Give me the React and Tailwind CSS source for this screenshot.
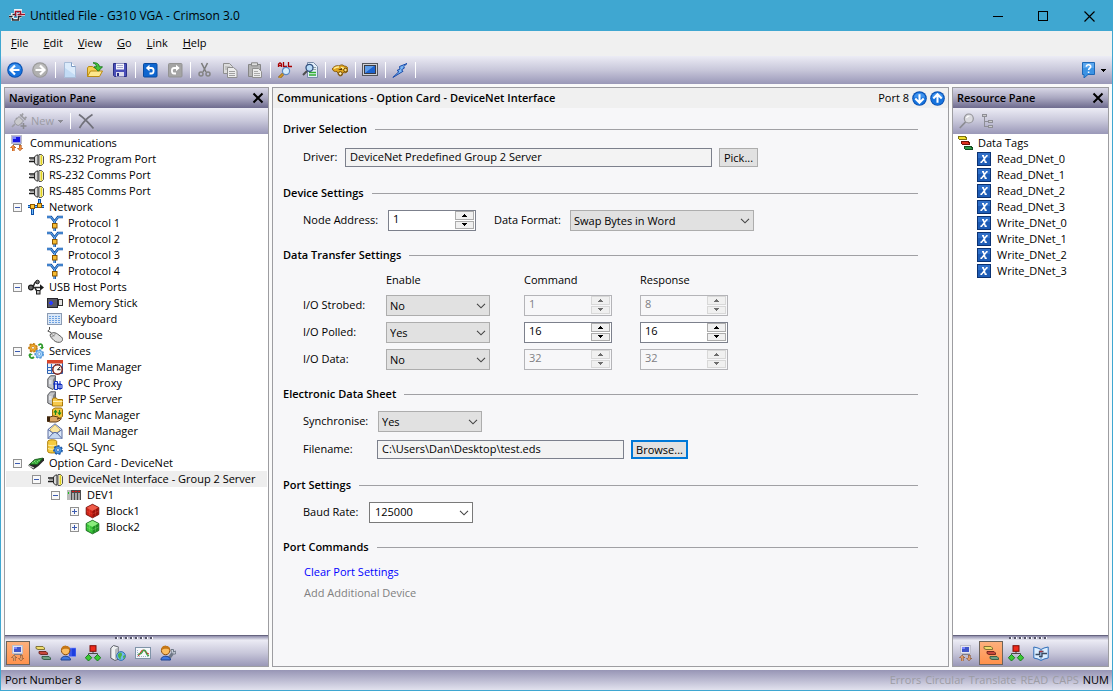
import React, { useState } from "react";

/* ---------- icons ---------- */

function Svg({ size = 16, children, crisp = false }) {
  return (
    <svg
      width={size}
      height={size}
      viewBox="0 0 16 16"
      fill="none"
      aria-hidden="true"
      className="block shrink-0"
      shapeRendering={crisp ? "crispEdges" : "auto"}
    >
      {children}
    </svg>
  );
}

const AppIcon = () => (
  <Svg>
    <path d="M0 8.500h4M3.500 8.500v-2h4M3.500 8v3.500h6v-3h3M6.500 5.500v-3h5v4h4.500M8 6.500h2.500v2" stroke="#f3f7fa" strokeWidth="2.800" />
    <path d="M0 8.500h3.500M7 6.500H3.500M3.500 10v2h6V8.500h3" stroke="#26262a" strokeWidth="1.500" />
    <path d="M0 9.800h3" stroke="#85858c" />
    <path d="M6.500 8.500v-5h5v3H16M8.500 6.500h3v-3" stroke="#a01328" strokeWidth="1.500" />
  </Svg>
);

const RoundArrow = ({ dir = "left", gray = false, size = 16 }) => {
  const turn = { left: 0, up: 90, right: 180, down: 270 }[dir];
  return (
    <Svg size={size}>
      <circle cx="8" cy="8" r="7.800" fill={gray ? "#989898" : "#0a4fae"} />
      <circle cx="8" cy="8" r="6.800" fill={gray ? "#b0b0b0" : "#1673de"} />
      <path d="M2 7a6 5 0 0 1 12 0z" fill={gray ? "#bdbdbd" : "#3f92ec"} />
      <g transform={`rotate(${turn} 8 8)`}>
        <path d="M3.500 8h9M8 3.500 3.500 8 8 12.500" stroke="#fff" strokeWidth="2.200" />
      </g>
    </Svg>
  );
};

const NewIcon = () => (
  <Svg>
    <path d="M2.500.5h7l4 4v11h-11z" fill="#dcebfb" stroke="#a9bdd8" />
    <path d="M3 15 3 6 13 13v2z" fill="#c2dbf5" />
    <path d="M9.500.5v4h4" fill="#fff" stroke="#7f9cc4" />
  </Svg>
);
const OpenIcon = () => (
  <Svg>
    <path d="M.5 14.500V6l1-1.500h4L7 6h5.500v3" fill="#f5cf52" stroke="#b98a12" />
    <path d="M.5 14.500 3.500 9h12l-3 5.500z" fill="#fde88d" stroke="#b98a12" />
    <path d="M6 .8c4-.4 6 1 6.500 4H15.500l-4.200 4.400L7 4.800h2.500C9.300 3 8.500 2 6 .8z" fill="#46c33c" stroke="#18771a" strokeWidth=".9" />
  </Svg>
);
const SaveIcon = () => (
  <Svg>
    <path d="M1.500 1.500h13v13h-12l-1-1z" fill="#4a4fb8" stroke="#2b2f86" />
    <path d="M4 1.500h8v6H4z" fill="#f4f4fb" />
    <path d="M5 3.500h6M5 5.500h6" stroke="#a9aad0" />
    <path d="M4 10h8v4.500H4z" fill="#dcdcec" />
    <path d="M5 11h2v3H5z" fill="#2b2f86" />
  </Svg>
);
const UndoIcon = ({ gray = false }) => (
  <Svg>
    <rect x="1.500" y="1.500" width="13.500" height="13.500" rx="1" fill={gray ? "#a4a4a4" : "#0f66cf"} stroke={gray ? "#939393" : "#0a4a9f"} />
    <g transform={gray ? "translate(16.500 0) scale(-1 1)" : undefined}>
      <path d="M5 6h4.500c2.800 0 2.800 5.500 0 5.500H7.500" stroke="#fff" strokeWidth="1.800" />
      <path d="M7.500 2.800 3.800 6l3.700 3.200z" fill="#fff" />
    </g>
  </Svg>
);
const CutIcon = () => (
  <Svg>
    <path d="M4.500 1 9 10M10.500 1 6 10" stroke="#7d7d7d" strokeWidth="1.600" />
    <circle cx="4" cy="12" r="2" stroke="#848484" strokeWidth="1.500" />
    <circle cx="11" cy="12" r="2" stroke="#848484" strokeWidth="1.500" />
  </Svg>
);
const CopyIcon = () => (
  <Svg>
    <path d="M1.500 1.500h6l3 3v7h-9z" fill="#dcdcdc" stroke="#8f8f8f" />
    <path d="M3 5h5M3 7h5" stroke="#aaa" />
    <path d="M5.500 5.500h6l3.500 3v7H5.500z" fill="#ececec" stroke="#8f8f8f" />
    <path d="M7 9.500h6M7 11.500h6M7 13.500h6" stroke="#a0a0a0" />
  </Svg>
);
const PasteIcon = () => (
  <Svg>
    <path d="M1.500 2.500h12v12h-12z" fill="#b3b3b3" stroke="#868686" />
    <path d="M4.500.8h6v3h-6z" fill="#dedede" stroke="#868686" />
    <path d="M5.500 6.500h6l3 3v6h-9z" fill="#ececec" stroke="#8f8f8f" />
    <path d="M7 9.500h4M7 11.500h6M7 13.500h6" stroke="#aaa" />
  </Svg>
);
const Magnifier = ({ x = 0, y = 0, handle = "#d39a2b" }) => (
  <g transform={`translate(${x} ${y})`}>
    <path d="M6.500 9.500 2 14" stroke="#8d6417" strokeWidth="3" />
    <path d="M6.500 9.500 2.300 13.700" stroke={handle} strokeWidth="1.600" />
    <circle cx="9" cy="7" r="3.600" fill="#d6eefc" stroke="#5a8ac4" strokeWidth="1.200" />
  </g>
);
const FindAllIcon = () => (
  <Svg>
    <path d="M1.500 5V2L3 .8 4.500 2v3M1.500 3.500h3M6.500 0v4.500H10M11.500 0v4.500H15" stroke="#a80000" strokeWidth="1.300" />
    <Magnifier y={2} />
  </Svg>
);
const FindInIcon = () => (
  <Svg>
    <path d="M5.500.5h6l4 4v11h-10z" fill="#e4effa" stroke="#7a8ca8" />
    <path d="M11 5.500h3M11 7.500h3" stroke="#9aa" />
    <path d="M7 10.500h7M7 13h7" stroke="#2fae2f" strokeWidth="1.500" />
    <path d="M5 9 1 13" stroke="#4d4d4d" strokeWidth="2" />
    <circle cx="7.500" cy="5.800" r="3.500" fill="#b9dcf8" stroke="#31507e" strokeWidth="1.300" />
  </Svg>
);
const BinocularsIcon = () => (
  <Svg>
    <path d="M0 7c2-3 5-4 7-3 2-1.500 4-1.500 5 0 3 0 4.500 2 4 4.500-1 2.500-3 2.500-5 2l-1 3c-2 1-4 0-4-2L5 9.500C3 10 1 9 0 7z" fill="#e0a51d" stroke="#85560a" strokeWidth=".9" />
    <path d="M2 6.500c2-1.500 3-2 5-1.500M9 5.500l3 1" stroke="#fff0a0" strokeWidth="1.500" />
    <circle cx="8.300" cy="11.500" r="1.800" fill="#fff3bb" stroke="#6a4508" />
    <circle cx="13.500" cy="8" r="1.800" fill="#ffe27a" stroke="#6a4508" />
    <path d="M6 8h4v-2z" fill="#4b3206" />
  </Svg>
);
const ScreenIcon = () => (
  <Svg>
    <rect x=".5" y="1.500" width="15" height="12" fill="#cfd0d6" stroke="#56575d" />
    <rect x="2.500" y="3.500" width="11" height="8" fill="#1d63cf" stroke="#3a3b45" />
    <path d="M3 11V4h9z" fill="#7cb6f5" opacity=".7" />
  </Svg>
);
const LightningIcon = () => (
  <Svg>
    <path d="M15 1.500 7.500 4.500 8 7 5 8.500l2 1L.8 15.500 11 9.300 9.500 7.800l3-1.800-1-1.200z" fill="#7dbaf6" stroke="#1648a8" strokeLinejoin="round" />
  </Svg>
);
const HelpIcon = () => (
  <Svg>
    <path d="M1.500.5h12v12H7L3 16v-3.500H1.500z" fill="#3c93e4" stroke="#1c68b8" />
    <path d="M2 1h11v5H2z" fill="#5aa6ee" />
    <path d="M5.300 4.800c.2-3 4.800-2.500 4.400 0-.2 1.300-2.100 1.400-2.100 3.200M7.600 9.500v1.600" stroke="#fff" strokeWidth="1.600" />
  </Svg>
);

const CommsIcon = ({ muted = false }) => (
  <Svg crisp>
    <rect x="2" y="0" width="11" height="9" fill="#bdbdca" />
    <rect x="3" y="1" width="9" height="7" fill={muted ? "#e4e4ee" : "#9a9ae6"} />
    <rect x="4" y="2" width="7" height="5" fill={muted ? "#3f55c8" : "#1616e0"} />
    <path d="M4 2h3v2H4z" fill="#7a86ff" />
    <path d="M4 9h8v1H4z" fill="#7f7f8b" />
    <path d="M4 10 1.500 12.500H3V16h2v-3.500h1.500zM11 16l-2.500-3H10v-3h2v3h1.500z" fill={muted ? "#d99a6c" : "#ee8a3e"} stroke={muted ? "#8d5a34" : "#b4561a"} strokeWidth=".6" />
  </Svg>
);
const PortIcon = () => (
  <Svg>
    <path d="M1 7h6M1 10.500h6" stroke="#1c1c1c" strokeWidth="1.600" />
    <path d="M2 8.700h5" stroke="#9b9b9b" strokeWidth="1.500" />
    <path d="M6.500 6 8.500 4h1.500v10H8.500l-2-2z" fill="#d8d8d8" stroke="#2c2c2c" />
    <path d="M11 3.500h2.500l2 2v7l-2 2H11z" fill="#fffdf0" stroke="#444" strokeWidth=".9" />
    <path d="M12.500 4.200h1.800v9.600h-1.800z" fill="#e0d21c" />
  </Svg>
);
const NetworkIcon = () => (
  <Svg crisp>
    <path d="M0 7.500h16M4.500 8v8M11.500 0v6" stroke="#0d4fa8" strokeWidth="3" />
    <path d="M0 7.500h16M4.500 8v7M11.500 1v5" stroke="#74bdf8" strokeWidth="1" />
    <rect x="2.500" y="5.500" width="4" height="4" fill="#ffc736" stroke="#8a5600" />
    <rect x="9.500" y="4.500" width="4" height="4" fill="#ffc736" stroke="#8a5600" />
  </Svg>
);
const ProtocolIcon = () => (
  <Svg>
    <path d="M0 2h4l3.500 4.500L11 2h5M7.700 6v10" stroke="#0f4ea6" strokeWidth="2.600" />
    <path d="M0 2h4l3.500 4.500L11 2h5M7.700 6v10" stroke="#79c0f7" strokeWidth=".9" />
    <rect x="5.500" y="8.500" width="4.500" height="4.500" fill="#f7bd34" stroke="#8a5600" />
  </Svg>
);
const UsbIcon = () => (
  <Svg>
    <path d="M2 8.500h11M4.500 8C6 8 6 3 8 3h1.500M6.500 9c1.500 0 1.500 4 4 4" stroke="#2b2b2b" strokeWidth="1.600" />
    <circle cx="2.900" cy="8.500" r="2.400" fill="#666" stroke="#1c1c1c" strokeWidth="1.200" />
    <path d="M12 5.300v6.400l4-3.200z" fill="#1c1c1c" />
    <circle cx="9.500" cy="3" r="1.800" fill="#777" stroke="#1c1c1c" />
    <rect x="8.500" y="11.500" width="3.500" height="3.500" fill="#bbb" stroke="#1c1c1c" />
  </Svg>
);
const MemoryIcon = () => (
  <Svg crisp>
    <rect x="0" y="3" width="11" height="10" fill="#26262c" />
    <rect x="1" y="4" width="9" height="8" fill="#5a5a66" />
    <path d="M2 8h4M4 6v4" stroke="#2a3cff" strokeWidth="2" />
    <rect x="11.500" y="4.500" width="4" height="6" fill="#e2e2e2" stroke="#333" />
  </Svg>
);
const KeyboardIcon = () => (
  <Svg crisp>
    <rect x=".5" y="2.500" width="14" height="11" fill="#dbe8f7" stroke="#8b9bb3" />
    <path d="M2 5.500h11M2 7.500h11M2 9.500h11M2 11.500h11" stroke="#6ea2e2" strokeDasharray="2 1" />
  </Svg>
);
const MouseIcon = () => (
  <Svg>
    <path d="M2.500 0v2.500L.8 4 4 5.500l1 2" stroke="#4b4b4b" />
    <path d="M3.500 7c2-2 5-1.500 7 0l4 3c2 2 1 5-2 5.300-3 .3-5-1-7-3.300-2-2-3-3.500-2-5z" fill="#dedede" stroke="#5a5a5a" />
    <path d="M4 10c2 0 4-2 4.500-4M4.500 7.500l3 1.500" stroke="#8b8b8b" />
  </Svg>
);
const GearShape = ({ cx, cy, r, fill, stroke }) => (
  <g>
    <circle cx={cx} cy={cy} r={r} stroke={stroke} strokeWidth="2.600" strokeDasharray="1.900 1.300" />
    <circle cx={cx} cy={cy} r={r} fill={fill} stroke={stroke} strokeWidth=".8" />
    <circle cx={cx} cy={cy} r={r / 2.500} fill="#fff" stroke={stroke} strokeWidth=".7" />
  </g>
);
const ServicesIcon = () => (
  <Svg>
    <GearShape cx={5} cy={4.800} r={3.500} fill="#f2ac30" stroke="#c47c12" />
    <GearShape cx={11.200} cy={11} r={3.500} fill="#a9d5fa" stroke="#4a92d8" />
    <path d="M10.500 2.500C12 0 15 1 14 4.500M6 14c-2 2-5 1-4-2.500" stroke="#2f9a2c" strokeWidth="1.800" />
    <path d="M11.500 4h4.500l-2 2.500zM0 12.500 2 10l3 2z" fill="#2f9a2c" />
  </Svg>
);
const TimeIcon = () => (
  <Svg>
    <path d="M.5 1.500h15v13H.5z" fill="#e9f1fb" stroke="#2f5ea8" />
    <path d="M0 1h16v3.500H0z" fill="#d8452a" />
    <path d="M4.500 5v10M8.500 5v10M12.500 5v9M0 8.500h16M0 11.500h16" stroke="#2f69c0" />
    <circle cx="10.500" cy="10.500" r="4.700" fill="#fff6f2" stroke="#7a1c14" strokeWidth="1.400" />
    <path d="M10.500 10.700h3M10.500 11l2.500-3" stroke="#222" />
  </Svg>
);
const ServerShape = () => (
  <g>
    <path d="M.8 4 3.500.8h5v10L6 14.500.8 12z" fill="#c3c5c9" stroke="#54565b" />
    <path d="M6 14V4.500L8.500 1v10z" fill="#7d8086" />
    <path d="M2 6h2.500M2 8h2.500" stroke="#fff" />
  </g>
);
const OpcIcon = () => (
  <Svg>
    <ServerShape />
    <path d="M7.500 6.500h3v8h-3zM11 9.500h4v4h-4zM6 9h8M13 6v9" fill="#d7dcff" stroke="#1230c0" />
  </Svg>
);
const FtpIcon = () => (
  <Svg>
    <ServerShape />
    <path d="M5.500 15V8l1-1h3l1 1.500h5V15z" fill="#f6c94d" stroke="#a87708" />
    <path d="M6 10.500h9.500" stroke="#ffefae" />
  </Svg>
);
const SyncIcon = () => (
  <Svg>
    <path d="M5.500 2.500 8 1h6.500l1 1.500v7l-2 1.500H5.500z" fill="#f3c53c" stroke="#a06f06" />
    <path d="M7 5.500 8.500 3.500 10 5.500M8.500 4v4M11 5.500l1.500 2L14 5.500M12.500 3v4" stroke="#1f8a1f" strokeWidth="1.200" />
    <path d="M0 10h3l3-1 5 1c1 .5 0 2-1 2l4-1c1 1-2 3.500-5 4H3L0 14z" fill="#dca768" stroke="#5f3b12" />
    <path d="M0 9.500h3v5H0z" fill="#3d240c" />
  </Svg>
);
const MailIcon = () => (
  <Svg>
    <path d="M1 6.500 8 .8l7 5.700v9H1z" fill="#dce8f8" stroke="#5b6ca0" />
    <path d="M3.500 6 8 2l4.500 4v2L8 11 3.500 8z" fill="#fbe7a0" stroke="#c9a544" strokeWidth=".7" />
    <path d="M1 15.500 6.500 9.500h3l5.500 6M1 6.500l5.500 4M15 6.500l-5.500 4" stroke="#5b6ca0" fill="#c3d6f0" />
  </Svg>
);
const SqlIcon = () => (
  <Svg>
    <path d="M.7 2.500c0-2.300 9-2.300 9 0v10c0 2-9 2-9 0z" fill="#f6cb3e" stroke="#ad7f0a" />
    <path d="M1 6c1.500 1 7 1 8.500 0M1 9.500c1.500 1 7 1 8.500 0" stroke="#fff1ae" />
    <GearShape cx={11} cy={11} r={3.600} fill="#4f9ae6" stroke="#1d59a8" />
  </Svg>
);
const CardIcon = () => (
  <Svg>
    <path d="M0 10.500 6.500 4.500 16 3v2.500L10.500 11 5.500 14.500z" fill="#2a2a2a" />
    <path d="M1.500 9.500 7 4.500 15 3l-5.500 6.500z" fill="#2f9e33" stroke="#17591a" strokeWidth=".7" />
    <path d="M4.500 8 8 5.300M7.500 8.300 12 4.800" stroke="#8ff088" strokeWidth="1.400" strokeDasharray="1 1" />
    <path d="M.5 10.500 6 13" stroke="#d9d9d9" strokeWidth="1.200" />
  </Svg>
);
const DevIcon = () => (
  <Svg crisp>
    <path d="M1 3h14v10H1z" fill="#4c4c4c" />
    <path d="M1 3h4v10H1z" fill="#bababa" />
    <path d="M7 6v7M10 6v7M13 6v7" stroke="#a9a9a9" strokeWidth="2" />
    <path d="M2 5h1v2H2z" fill="#1cc51c" />
    <path d="M6 4.500h2M9 4.500h2M12 4.500h2" stroke="#e01515" />
  </Svg>
);
const CubeIcon = ({ tone }) => {
  const c = tone === "red" ? ["#ee5b49", "#d12317", "#9c120b", "#6f0b06"] : ["#8aec7d", "#3cc63a", "#1f8f24", "#0f5d14"];
  return (
    <Svg>
      <path d="M7.500 1.300 13.800 4.500v7l-6.300 3.300-6.300-3.300v-7z" fill={c[1]} stroke={c[3]} strokeWidth=".9" />
      <path d="M7.500 1.700 13.300 4.700 7.500 8 1.700 4.700z" fill={c[0]} />
      <path d="M7.500 8v6.400l5.800-3.200V4.700z" fill={c[2]} />
      <path d="M4.500 3.500v9M10.500 3.500v9M1.500 8l6 3 6-3" stroke={c[0]} strokeWidth=".6" opacity=".6" />
    </Svg>
  );
};
const TagsIcon = () => (
  <Svg crisp>
    <path d="M1 1.500h7l1 1v2H3l-2-1z" fill="#f2e22c" stroke="#7d7310" />
    <path d="M4 6.500h7l1 1v2H6l-2-1z" fill="#e0311f" stroke="#6d1208" />
    <path d="M7 11.500h7l1 1v2H9l-2-1z" fill="#2f9a4a" stroke="#114d1f" />
  </Svg>
);
const MutedTagsIcon = () => (
  <Svg>
    <path d="M1 1.500h7l1.500 1.500v1.500H3L1 3.500z" fill="#f0dd6c" stroke="#75692c" strokeWidth=".9" />
    <path d="M4 6.500h7L12.500 8v1.500H6L4 8.500z" fill="#c8473d" stroke="#6b211b" strokeWidth=".9" />
    <path d="M7 11.500h7l1.500 1.500v1.500H9l-2-1z" fill="#6fa083" stroke="#2f5a42" strokeWidth=".9" />
  </Svg>
);
const VarIcon = () => (
  <Svg>
    <rect x="1.500" y="1.500" width="13" height="13" fill="#1c5bb5" stroke="#0b3272" />
    <path d="M2 2h12v5H2z" fill="#2f6fc8" />
    <path d="M6 4.800h1.300L9.300 11.200h1.500M11.700 4.800h-1L5.500 11.200H4.400" stroke="#fff" strokeWidth="1.500" />
  </Svg>
);
const UserIcon = ({ wrench = false }) => (
  <Svg>
    {wrench ? (
      <>
        <path d="M8 14.500 12.500 8.500" stroke="#6f7887" strokeWidth="3" />
        <path d="M11 4.500c0 3.500 2 5 4.500 4.500l.5-3-2.500 1V4.500z" fill="#c8ced8" stroke="#6f7887" />
      </>
    ) : (
      <path d="M9 3h7v8.500H9zM11 3v8.500" fill="#1d3fe0" stroke="#7f92ff" strokeWidth=".6" />
    )}
    <path d="M1 15c-.5-5 9.500-5 9.500 0z" fill="#3f78e0" stroke="#1c418f" />
    <circle cx="5.600" cy="5.500" r="4.200" fill="#fbbe62" stroke="#8c4f0d" />
    <path d="M1.500 5C1 1 4.500.3 6.500 1c3 .3 3.800 2 3.300 4-1.800-1.500-5.300-2-8.300 0z" fill="#c57716" />
  </Svg>
);
const TreeIcon = () => (
  <Svg>
    <path d="M8 6v3M3.500 11V8.500h9V11" stroke="#4a4a4a" />
    <rect x="5" y=".7" width="6" height="5.600" fill="#ee2a1c" stroke="#7c0d06" />
    <path d="M3.500 9.500 6.800 12.700 3.500 16 .3 12.700zM12.500 9.500l3.300 3.200-3.300 3.300-3.200-3.300z" fill="#3bc934" stroke="#14741a" strokeWidth=".9" />
  </Svg>
);
const WebIcon = () => (
  <Svg>
    <path d="M.8 3 3.500.5l5 1.500v12L5 15.500.8 13z" fill="#eef0f2" stroke="#5c6068" />
    <path d="M5 15V4.500L8.500 2v11z" fill="#b5b9c0" />
    <circle cx="11" cy="11" r="4.400" fill="#6fb5f0" stroke="#2e6aa8" strokeWidth=".9" />
    <path d="M8 9.500c2-3 4-2 4 0s-2 2-1 5c-2-.5-3.500-3-3-5zM13 11l2-1c.5 2-.5 3.500-1.500 4z" fill="#4cb548" />
  </Svg>
);
const ChartIcon = () => (
  <Svg>
    <rect x=".5" y="2.500" width="15" height="11" fill="#f4f7fb" stroke="#7f93a8" />
    <path d="M2.500 12v-8M2 11.500h12" stroke="#9db4c8" strokeDasharray="1 1" />
    <path d="M3 11c2-1 3-6 5-6s3 4 6 4" stroke="#d0342b" strokeWidth="1.200" />
    <path d="M3 9c3 1 4-1 5-3s3 0 3 1 1 3 3 4" stroke="#35a145" strokeWidth="1.200" />
  </Svg>
);
const BookIcon = () => (
  <Svg>
    <path d="M.8 2 5 3l3 1.500L11 3l4.200-1v11L11 14l-3 1.500L5 14 .8 13z" fill="#dceeff" stroke="#2f6db8" />
    <path d="M8 4.500v11" stroke="#5e93cf" />
    <path d="M2.500 9.500h4v-3h4M6 11.500h3v-3h5" stroke="#394a5f" strokeWidth="1.300" />
    <path d="M6.500 6.500h3" stroke="#b2313c" strokeWidth="1.300" />
  </Svg>
);
const AddPortIcon = () => (
  <Svg>
    <path d="M1 14l3-3M5 5l6 6M9 1.500 14.500 7M10 4l2-3.500M13 6l2.500-2" stroke="#9c9ca2" strokeWidth="1.700" />
    <path d="M4 7.500 8 3.500 12.500 8l-4 4c-2 1.500-6-2-4.500-4.500z" fill="#c9c9cd" stroke="#929298" />
    <path d="M12.500 10v6M9.500 13h6" stroke="#8a8a90" strokeWidth="1.500" />
  </Svg>
);
const DeleteIcon = () => (
  <Svg>
    <path d="M1 1.500C6 5 10 9 15.500 15.500M14.500 1.500C9 5 5 9 1.500 15" stroke="#71717a" strokeWidth="1.700" />
  </Svg>
);
const GraySearchIcon = () => (
  <Svg>
    <path d="M6.500 9 .8 15" stroke="#8c8c92" strokeWidth="1.800" />
    <circle cx="9.800" cy="5.500" r="4.500" fill="#d9d9de" stroke="#939398" strokeWidth="1.200" />
    <path d="M7.500 5c.5-1.500 1.500-2 3-2" stroke="#fff" strokeWidth="1.200" />
  </Svg>
);
const GrayTreeIcon = () => (
  <Svg crisp>
    <path d="M3.500 4v9h4M4 8.500h4" stroke="#8e8e96" />
    <rect x="1.500" y="1.500" width="4" height="2" fill="#ccc" stroke="#8e8e96" />
    <rect x="7.500" y="7.500" width="4" height="2" fill="#ccc" stroke="#8e8e96" />
    <rect x="7.500" y="12.500" width="4" height="2" fill="#ccc" stroke="#8e8e96" />
  </Svg>
);
const CloseX = () => (
  <svg width="12" height="12" viewBox="0 0 12 12" aria-hidden="true" className="block">
    <path d="M1.500 1.500 10.500 10.500M10.500 1.500 1.500 10.500" stroke="#000" strokeWidth="2" />
  </svg>
);

/* ---------- shared parts ---------- */

const barGradient = "bg-linear-to-b from-[#ececf5] via-[#c8c7da] to-[#9a98b8]";

const ToolButton = ({ label, disabled, children }) => (
  <button type="button" aria-label={label} disabled={disabled} className="flex h-6 w-[25px] shrink-0 items-center pl-1">
    {children}
  </button>
);

const Separator = () => (
  <span className="flex w-[5px] shrink-0 justify-center">
    <span className="h-4 w-px bg-white" />
  </span>
);

function PaneHeader({ title }) {
  return (
    <header className="flex h-5 shrink-0 items-center justify-between bg-linear-to-b from-[#d8d7e6] via-[#a9a7c0] to-[#6e6b8e] pr-1 pl-1">
      <h2 className="font-semibold">{title}</h2>
      <button type="button" aria-label={`Close ${title}`}>
        <CloseX />
      </button>
    </header>
  );
}

const indent = ["pl-1", "pl-2", "pl-[27px]", "pl-[46px]", "pl-[65px]"];

function TreeRow({ level, icon, label, expander, selected }) {
  return (
    <li className={`mx-px flex h-4 items-center ${selected ? "bg-[#eeeeee]" : ""}`}>
      <span className={`-ml-px flex items-center ${indent[level]}`}>
        {level > 0 && (
          <span className="w-[15px] shrink-0">
            {expander && (
              <button type="button" aria-label={expander === "+" ? `Expand ${label}` : `Collapse ${label}`} className="block">
                <svg width="9" height="9" viewBox="0 0 9 9" shapeRendering="crispEdges" aria-hidden="true" className="block">
                  <rect x=".5" y=".5" width="8" height="8" fill="#f8f8f8" stroke="#919191" />
                  <path d={expander === "+" ? "M2 4.500h5M4.500 2v5" : "M2 4.500h5"} stroke="#3c5bb0" />
                </svg>
              </button>
            )}
          </span>
        )}
        {icon}
        <span className="pl-[5px] whitespace-nowrap">{label}</span>
      </span>
    </li>
  );
}

function PaneTabs({ tabs, active, label }) {
  const [current, setCurrent] = useState(active);
  return (
    <footer className="shrink-0">
      <div className="flex h-[5px] justify-center border-t border-[#66647f] bg-linear-to-b from-[#8f8dab] to-[#e6e6f0] pt-px pr-1.5">
        <svg width="38" height="2" viewBox="0 0 38 2" shapeRendering="crispEdges" aria-hidden="true">
          <path d="M0 1h38" stroke="#55556a" strokeWidth="2" strokeDasharray="2 3" />
          <path d="M2 1h38" stroke="#fff" strokeWidth="2" strokeDasharray="1 4" />
        </svg>
      </div>
      <nav aria-label={label} className={`flex h-[26px] items-center gap-px pl-px ${barGradient}`}>
        {tabs.map(([name, icon], i) => (
          <button
            key={name}
            type="button"
            aria-label={name}
            aria-pressed={i === current}
            onClick={() => setCurrent(i)}
            className={`flex size-6 items-center justify-center border ${
              i === current ? "border-[#6d6359] bg-linear-to-b from-[#fdb07c] to-[#ff924c]" : "border-transparent"
            }`}
          >
            {icon}
          </button>
        ))}
      </nav>
    </footer>
  );
}

function Section({ title, children }) {
  return (
    <section>
      <h3 className="flex h-4 items-center gap-2 font-semibold">
        {title}
        <span className="h-px flex-1 bg-[#a0a0a4]" />
      </h3>
      <div className="mt-[9px] flex flex-col gap-1.5 pl-5">{children}</div>
    </section>
  );
}

function Label({ htmlFor, className = "", children }) {
  return (
    <label htmlFor={htmlFor} className={`block pb-0.5 ${className}`}>
      {children}
    </label>
  );
}

function Select({ id, value, options, className, white }) {
  return (
    <span className={`relative block h-[21px] ${className}`}>
      <select
        id={id}
        defaultValue={value}
        className={`block h-full w-full appearance-none border pr-5 outline-none ${
          white ? "border-[#7a7a7a] bg-white pb-px pl-[5px]" : "border-[#adadad] bg-[#e1e1e1] pl-[3px]"
        }`}
      >
        {options.map((o) => (
          <option key={o}>{o}</option>
        ))}
      </select>
      <svg width="10" height="6" viewBox="0 0 10 6" fill="none" aria-hidden="true" className="pointer-events-none absolute top-2 right-1">
        <path d="M1 .8 5 4.800 9 .8" stroke="#444" strokeWidth="1.100" />
      </svg>
    </span>
  );
}

function SpinButton({ label, up, disabled, onClick }) {
  return (
    <button
      type="button"
      aria-label={label}
      disabled={disabled}
      onClick={onClick}
      className={`flex flex-1 items-center justify-center border bg-[#f0f0f0] ${disabled ? "border-[#d8d8d8]" : "border-[#acacac]"}`}
    >
      <svg width="5" height="3" viewBox="0 0 5 3" shapeRendering="crispEdges" aria-hidden="true">
        <path d={up ? "M2 0h1v1h1v1h1v1H0V2h1V1h1z" : "M0 0h5v1H4v1H3v1H2V2H1V1H0z"} fill={disabled ? "#6d6d6d" : "#000"} />
      </svg>
    </button>
  );
}

function Spinner({ id, value, label, disabled }) {
  const [n, setN] = useState(value);
  return (
    <span className={`flex h-[21px] w-[88px] border ${disabled ? "border-[#b4b4b8] bg-[#f7f7f9] text-[#808084]" : "border-[#7c808c] bg-white"}`}>
      <input
        id={id}
        aria-label={label}
        value={n}
        disabled={disabled}
        onChange={(e) => setN(e.target.value)}
        className="w-0 min-w-0 flex-1 bg-transparent pb-1 pl-1 outline-none"
      />
      <span className="flex w-5 flex-col gap-px pr-px pb-px">
        <SpinButton label={`Increase ${label}`} up disabled={disabled} onClick={() => setN(Number(n) + 1)} />
        <SpinButton label={`Decrease ${label}`} disabled={disabled} onClick={() => setN(Number(n) - 1)} />
      </span>
    </span>
  );
}

/* ---------- data ---------- */

const menus = ["File", "Edit", "View", "Go", "Link", "Help"];

const navTree = [
  [0, <CommsIcon />, "Communications"],
  [1, <PortIcon />, "RS-232 Program Port"],
  [1, <PortIcon />, "RS-232 Comms Port"],
  [1, <PortIcon />, "RS-485 Comms Port"],
  [1, <NetworkIcon />, "Network", "-"],
  [2, <ProtocolIcon />, "Protocol 1"],
  [2, <ProtocolIcon />, "Protocol 2"],
  [2, <ProtocolIcon />, "Protocol 3"],
  [2, <ProtocolIcon />, "Protocol 4"],
  [1, <UsbIcon />, "USB Host Ports", "-"],
  [2, <MemoryIcon />, "Memory Stick"],
  [2, <KeyboardIcon />, "Keyboard"],
  [2, <MouseIcon />, "Mouse"],
  [1, <ServicesIcon />, "Services", "-"],
  [2, <TimeIcon />, "Time Manager"],
  [2, <OpcIcon />, "OPC Proxy"],
  [2, <FtpIcon />, "FTP Server"],
  [2, <SyncIcon />, "Sync Manager"],
  [2, <MailIcon />, "Mail Manager"],
  [2, <SqlIcon />, "SQL Sync"],
  [1, <CardIcon />, "Option Card - DeviceNet", "-"],
  [2, <PortIcon />, "DeviceNet Interface - Group 2 Server", "-", true],
  [3, <DevIcon />, "DEV1", "-"],
  [4, <CubeIcon tone="red" />, "Block1", "+"],
  [4, <CubeIcon tone="green" />, "Block2", "+"],
];

const dataTags = ["Read_DNet_0", "Read_DNet_1", "Read_DNet_2", "Read_DNet_3", "Write_DNet_0", "Write_DNet_1", "Write_DNet_2", "Write_DNet_3"];

const transfers = [
  ["I/O Strobed", "No", 1, 8],
  ["I/O Polled", "Yes", 16, 16],
  ["I/O Data", "No", 32, 32],
];

/* ---------- page ---------- */

function TitleBar() {
  return (
    <header className="flex h-[30px] shrink-0 items-center bg-[#3fa7d1] pl-2">
      <AppIcon />
      <h1 className="flex-1 pl-[5px] text-[12px]">Untitled File - G310 VGA - Crimson 3.0</h1>
      <button type="button" aria-label="Minimize" className="flex h-full w-[45px] items-center justify-center">
        <svg width="11" height="11" viewBox="0 0 11 11" shapeRendering="crispEdges"><path d="M0 5.500h10" stroke="#000" /></svg>
      </button>
      <button type="button" aria-label="Maximize" className="flex h-full w-[45px] items-center justify-center">
        <svg width="11" height="11" viewBox="0 0 11 11" shapeRendering="crispEdges"><rect x=".5" y=".5" width="9" height="9" fill="none" stroke="#000" /></svg>
      </button>
      <button type="button" aria-label="Close" className="flex h-full w-[46px] items-center justify-center">
        <svg width="11" height="11" viewBox="0 0 11 11"><path d="M.5.5l10 10M10.500.5l-10 10" stroke="#000" strokeWidth="1.200" /></svg>
      </button>
    </header>
  );
}

function Toolbar() {
  return (
    <div role="toolbar" aria-label="Main" className={`flex h-7 shrink-0 items-center px-0.5 ${barGradient}`}>
      <ToolButton label="Back"><RoundArrow /></ToolButton>
      <ToolButton label="Forward" disabled><RoundArrow dir="right" gray /></ToolButton>
      <Separator />
      <ToolButton label="New"><NewIcon /></ToolButton>
      <ToolButton label="Open"><OpenIcon /></ToolButton>
      <ToolButton label="Save"><SaveIcon /></ToolButton>
      <Separator />
      <ToolButton label="Undo"><UndoIcon /></ToolButton>
      <ToolButton label="Redo" disabled><UndoIcon gray /></ToolButton>
      <Separator />
      <ToolButton label="Cut" disabled><CutIcon /></ToolButton>
      <ToolButton label="Copy" disabled><CopyIcon /></ToolButton>
      <ToolButton label="Paste" disabled><PasteIcon /></ToolButton>
      <Separator />
      <ToolButton label="Find all"><FindAllIcon /></ToolButton>
      <ToolButton label="Find in page"><FindInIcon /></ToolButton>
      <Separator />
      <ToolButton label="Find"><BinocularsIcon /></ToolButton>
      <Separator />
      <ToolButton label="Screen"><ScreenIcon /></ToolButton>
      <Separator />
      <ToolButton label="Download"><LightningIcon /></ToolButton>
      <Separator />
      <button type="button" aria-label="Help" className="mr-1 ml-auto flex items-center gap-1">
        <HelpIcon />
        <svg width="5" height="3" viewBox="0 0 5 3" shapeRendering="crispEdges"><path d="M0 0h5v1H4v1H3v1H2V2H1V1H0z" fill="#000" /></svg>
      </button>
    </div>
  );
}

const pane = "flex flex-col border border-[#9d9da1] bg-white";

export default function App() {
  return (
    <div className="flex min-h-screen flex-col border border-[#3fa7d1] bg-[#fafafa] font-['Open_Sans','Noto_Sans',sans-serif] text-[11px] leading-4 text-black">
      <TitleBar />
      <nav aria-label="Menu" className="flex h-[25px] shrink-0 items-center gap-[15px] bg-[#f0f0f0] pb-0.5 pl-2.5">
        {menus.map((m) => (
          <button key={m} type="button">
            <span className="underline">{m[0]}</span>
            {m.slice(1)}
          </button>
        ))}
      </nav>
      <Toolbar />

      <div className="flex flex-1 gap-[3px] p-[3px]">
        <aside className={`${pane} w-[265px] shrink-0`}>
          <PaneHeader title="Navigation Pane" />
          <div className={`flex h-[26px] shrink-0 items-center pl-1.5 ${barGradient}`}>
            <button type="button" disabled className="flex items-center gap-1 text-[#9b9ba3]">
              <AddPortIcon />
              <span>New</span>
              <svg width="5" height="3" viewBox="0 0 5 3" shapeRendering="crispEdges"><path d="M0 0h5v1H4v1H3v1H2V2H1V1H0z" fill="#8c8c94" /></svg>
            </button>
            <span className="mx-[7px] h-4 w-px bg-white" />
            <button type="button" aria-label="Delete" disabled>
              <DeleteIcon />
            </button>
          </div>
          <ul className="flex-1 pt-px">
            {navTree.map(([level, icon, label, expander, selected]) => (
              <TreeRow key={label} level={level} icon={icon} label={label} expander={expander} selected={selected} />
            ))}
          </ul>
          <PaneTabs
            label="Navigation views"
            active={0}
            tabs={[
              ["Communications", <CommsIcon muted />],
              ["Data Tags", <MutedTagsIcon />],
              ["Display Pages", <UserIcon />],
              ["Programs", <TreeIcon />],
              ["Web Server", <WebIcon />],
              ["Data Logger", <ChartIcon />],
              ["Security", <UserIcon wrench />],
            ]}
          />
        </aside>

        <main className={`${pane} min-w-0 flex-1`}>
          <header className="flex h-5 shrink-0 items-center gap-[3px] bg-[#f0f0f0] pr-[3px] pl-1">
            <h2 className="flex-1 font-semibold">Communications - Option Card - DeviceNet Interface</h2>
            <span>Port 8</span>
            <button type="button" aria-label="Next port"><RoundArrow dir="down" size={15} /></button>
            <button type="button" aria-label="Previous port"><RoundArrow dir="up" size={15} /></button>
          </header>
          <form className="flex flex-1 flex-col gap-4 bg-[#f7f7f9] pt-[13px] pr-[30px] pb-4 pl-2.5" onSubmit={(e) => e.preventDefault()}>
            <Section title="Driver Selection">
              <div className="flex h-[23px] items-center">
                <Label htmlFor="driver" className="w-[42px]">Driver:</Label>
                <input id="driver" readOnly value="DeviceNet Predefined Group 2 Server" className="h-[19px] w-[367px] border border-[#7c808c] bg-[#f3f3f3] pb-0.5 pl-1 outline-none" />
                <button type="button" className="ml-[7px] h-[19px] w-[39px] border border-[#adadad] bg-[#e1e1e1] leading-none">Pick...</button>
              </div>
            </Section>

            <Section title="Device Settings">
              <div className="flex items-center">
                <Label htmlFor="node" className="w-[85px]">Node Address:</Label>
                <Spinner id="node" value={1} label="Node Address" />
                <Label htmlFor="format" className="ml-[18px] w-[76px]">Data Format:</Label>
                <Select id="format" value="Swap Bytes in Word" options={["Swap Bytes in Word", "Normal"]} className="w-[184px]" />
              </div>
            </Section>

            <Section title="Data Transfer Settings">
              <div className="grid grid-cols-[83px_138px_116px_1fr] items-center gap-y-1.5">
                <span className="h-[17px]" />
                <span className="h-[17px]">Enable</span>
                <span className="h-[17px]">Command</span>
                <span className="h-[17px]">Response</span>
                {transfers.map(([name, enable, command, response]) => (
                  <React.Fragment key={name}>
                    <Label htmlFor={name}>{name}:</Label>
                    <Select id={name} value={enable} options={["No", "Yes"]} className="w-[104px]" />
                    <Spinner value={command} label={`${name} Command`} disabled={enable === "No"} />
                    <Spinner value={response} label={`${name} Response`} disabled={enable === "No"} />
                  </React.Fragment>
                ))}
              </div>
            </Section>

            <Section title="Electronic Data Sheet">
              <div className="flex items-center">
                <Label htmlFor="sync" className="w-[75px]">Synchronise:</Label>
                <Select id="sync" value="Yes" options={["No", "Yes"]} className="w-[104px]" />
              </div>
              <div className="flex h-[23px] items-center">
                <Label htmlFor="filename" className="w-[74px]">Filename:</Label>
                <input id="filename" readOnly value="C:\Users\Dan\Desktop\test.eds" className="h-[19px] w-[247px] border border-[#7c808c] bg-[#f3f3f3] pb-0.5 pl-1 outline-none" />
                <button type="button" className="ml-[7px] h-[19px] w-[57px] border-2 border-[#0078d7] bg-[#e1e1e1] leading-none">Browse...</button>
              </div>
            </Section>

            <Section title="Port Settings">
              <div className="flex items-center">
                <Label htmlFor="baud" className="w-[66px]">Baud Rate:</Label>
                <Select id="baud" white value="125000" options={["125000", "250000", "500000"]} className="w-[104px]" />
              </div>
            </Section>

            <Section title="Port Commands">
              <div className="flex flex-col items-start gap-[5px] pl-px">
                <a href="#clear" className="text-[#0000ff]">Clear Port Settings</a>
                <button type="button" disabled className="text-[#808080]">Add Additional Device</button>
              </div>
            </Section>
          </form>
        </main>

        <aside className={`${pane} w-[157px] shrink-0`}>
          <PaneHeader title="Resource Pane" />
          <div className={`flex h-[26px] shrink-0 items-center gap-1.5 pl-1.5 ${barGradient}`}>
            <button type="button" aria-label="Search" disabled><GraySearchIcon /></button>
            <button type="button" aria-label="Expand tree" disabled><GrayTreeIcon /></button>
          </div>
          <ul className="flex-1 pt-px">
            <TreeRow level={0} icon={<TagsIcon />} label="Data Tags" />
            {dataTags.map((t) => (
              <TreeRow key={t} level={1} icon={<VarIcon />} label={t} />
            ))}
          </ul>
          <PaneTabs
            label="Resource views"
            active={1}
            tabs={[
              ["Communications", <CommsIcon muted />],
              ["Data Tags", <MutedTagsIcon />],
              ["Programs", <TreeIcon />],
              ["Library", <BookIcon />],
            ]}
          />
        </aside>
      </div>

      <footer className="flex h-5 shrink-0 items-center justify-between bg-linear-to-b from-[#9795b5] to-[#e2e2ee] pr-[3px] pl-1">
        <span>Port Number 8</span>
        <span className="flex gap-1 text-[#9c9ca4]">
          <span>Errors</span>
          <span>Circular</span>
          <span>Translate</span>
          <span>READ</span>
          <span>CAPS</span>
          <span className="text-black">NUM</span>
        </span>
      </footer>
    </div>
  );
}
